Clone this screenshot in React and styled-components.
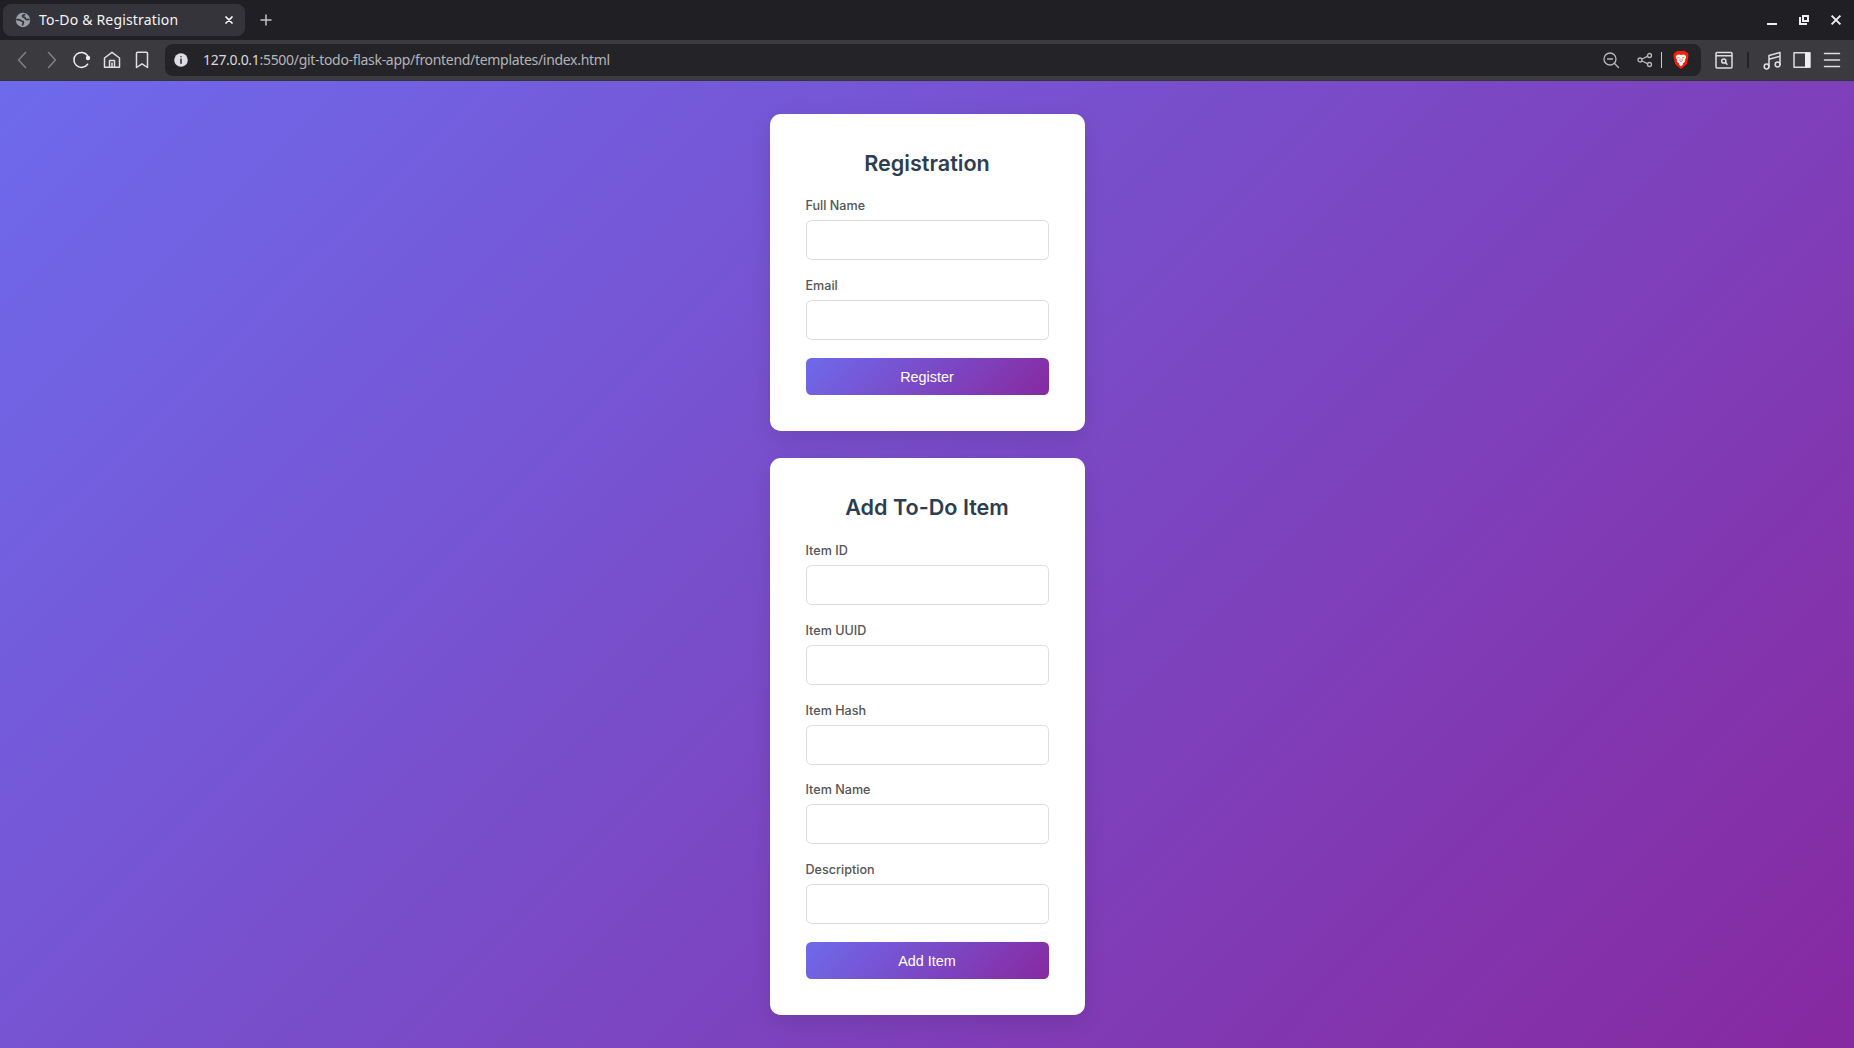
import React from "react";
import styled, { createGlobalStyle } from "styled-components";

const GlobalStyle = createGlobalStyle`
  * { box-sizing: border-box; }
  html, body { margin: 0; padding: 0; }
  body { font-family: Inter, "Liberation Sans", sans-serif; }
`;

const gradient = "linear-gradient(135deg, #6e6aec, #8729a0)";

const Window = styled.div`
  display: flex;
  flex-direction: column;
  width: 100%;
  height: 100vh;
  overflow: hidden;
`;

const Flex = styled.div`
  display: flex;
  align-items: center;
`;

const TabStrip = styled(Flex)`
  height: 40px;
  flex: none;
  padding: 0 9px 0 3px;
  background: #202024;
  color: #fff;
`;

const Tab = styled(Flex)`
  width: 242px;
  height: 32px;
  padding: 0 11px 0 12px;
  border-radius: 8px;
  background: #35343a;
`;

const TabTitle = styled.span`
  flex: 1;
  margin-left: 8px;
  font: 14px/20px "Noto Sans", sans-serif;
  letter-spacing: 0.18px;
  white-space: nowrap;
  color: #f4f4f6;
`;

const NewTab = styled(Flex)`
  margin-left: 15px;
  flex: 1;
`;

const WindowControls = styled(Flex)`
  gap: 14px;
  padding-right: 0.5px;
`;

const Toolbar = styled(Flex)`
  height: 41px;
  flex: none;
  padding: 0 12px;
  background: #3b3a3f;
  border-bottom: 1px solid #36343a;
`;

const NavButtons = styled(Flex)`
  gap: 10px;
  margin-right: 13px;
`;

const AddressBar = styled(Flex)`
  flex: 1;
  height: 32px;
  padding: 0 12px 0 9px;
  border-radius: 8px;
  background: #242428;
`;

const Address = styled.span`
  flex: 1;
  margin-left: 15px;
  font: 14px/20px "Noto Sans", sans-serif;
  letter-spacing: -0.31px;
  white-space: nowrap;
  color: #b4b4b8;
`;

const Host = styled.span`
  color: #d8d8dc;
`;

const Divider = styled.span`
  width: ${(p) => p.$width}px;
  height: 16px;
  margin: ${(p) => p.$margin};
  background: ${(p) => p.$color};
`;

const Actions = styled(Flex)`
  margin-left: 14px;
`;

const Tools = styled(Flex)`
  gap: 10px;
`;

const Icon = styled.svg`
  display: block;
  flex: none;
  width: ${(p) => p.$w || 20}px;
  height: ${(p) => p.$h || p.$w || 20}px;
  margin-left: ${(p) => p.$ml || 0}px;
  fill: none;
  stroke: ${(p) => p.$color || "#dedee2"};
  stroke-width: ${(p) => p.$stroke || 1.5};
  stroke-linecap: round;
  stroke-linejoin: round;
`;

const Page = styled.main`
  flex: 1;
  display: flex;
  flex-direction: column;
  align-items: center;
  gap: 27px;
  padding-top: 33px;
  background: ${gradient};
`;

const Card = styled.form`
  width: 315px;
  height: ${(p) => p.$height}px;
  flex: none;
  padding: 36px;
  border-radius: 10.8px;
  background: #fff;
  box-shadow: 0 7.2px 22.5px rgba(0, 0, 0, 0.1);
`;

const Title = styled.h2`
  margin: 0 0 20.45px;
  font-size: 21.6px;
  line-height: 27px;
  font-weight: 600;
  text-align: center;
  color: #2c3e50;
`;

const Field = styled.div`
  height: 63px;
  margin-bottom: 16.8px;

  &:last-of-type {
    margin-bottom: 18px;
  }
`;

const Label = styled.label`
  display: block;
  height: 23px;
  font-size: 12.6px;
  line-height: 18px;
  font-weight: 500;
  color: #555;
`;

const Input = styled.input`
  display: block;
  width: 100%;
  height: 40px;
  padding: 0 11px;
  border: 1px solid #ddd;
  border-radius: 5.4px;
  background: #fff;
  outline: none;
`;

const Submit = styled.button`
  display: block;
  width: 100%;
  height: 37px;
  padding: 0;
  border: 0;
  border-radius: 5.4px;
  background: ${gradient};
  font: 14.4px "Liberation Sans", Arial, sans-serif;
  color: #fff;
`;

function FormCard({ title, fields, action, height }) {
  return (
    <Card $height={height} onSubmit={(e) => e.preventDefault()}>
      <Title>{title}</Title>
      {fields.map((name) => (
        <Field key={name}>
          <Label htmlFor={name}>{name}</Label>
          <Input id={name} />
        </Field>
      ))}
      <Submit>{action}</Submit>
    </Card>
  );
}

function BrowserTabs() {
  return (
    <TabStrip>
      <Tab>
        <Icon $w={16} viewBox="0 0 16 16" $color="none">
          <circle cx="8" cy="8" r="7.2" fill="#9aa0a6" />
          <path d="M2 7.600c1.500-.2 3 .2 3.800 1 .9.900 2 .4 2.500 1.200.5.900-.5 1.500-.7 3" stroke="#35343a" strokeWidth="1.7" />
          <path d="M9.600 2.600c-1.500.3-2.300 1.100-1.900 1.900.5.900 1.800.5 2.300 1.300.5.900.2 1.500 1.300 1.700 1 .2 1.500-.2 2.500 0" stroke="#35343a" strokeWidth="1.7" />
        </Icon>
        <TabTitle>To-Do &amp; Registration</TabTitle>
        <Icon $w={10} viewBox="0 0 10 10" $color="#fff" $stroke={1.7}>
          <path d="M2 2l6 6M8 2l-6 6" />
        </Icon>
      </Tab>
      <NewTab>
        <Icon $w={12} viewBox="0 0 12 12" $color="#c4c4c8">
          <path d="M6 1v10M1 6h10" />
        </Icon>
      </NewTab>
      <WindowControls>
        <Icon $w={18} viewBox="0 0 18 18" $color="#eeeef2" $stroke={2}>
          <path d="M4 13h10" strokeLinecap="butt" />
        </Icon>
        <Icon $w={18} viewBox="0 0 18 18" $color="#eeeef2" $stroke={2}>
          <path d="M8 5h5v5H8zM5 6v7h7" strokeLinecap="butt" strokeLinejoin="miter" />
        </Icon>
        <Icon $w={18} viewBox="0 0 18 18" $color="#eeeef2" $stroke={2}>
          <path d="M4.600 4.600l8.800 8.800M13.400 4.600l-8.800 8.800" strokeLinecap="butt" />
        </Icon>
      </WindowControls>
    </TabStrip>
  );
}

function BrowserToolbar() {
  return (
    <Toolbar>
      <NavButtons>
        <Icon viewBox="0 0 20 20" $color="#828186">
          <path d="M13.500 2.500L6.500 10l7 7.500" />
        </Icon>
        <Icon viewBox="0 0 20 20" $color="#828186">
          <path d="M6.500 2.500l7 7.500-7 7.500" />
        </Icon>
        <Icon viewBox="0 0 20 20" $color="#f0f0f4">
          <path d="M15.600 14.200A7.500 7.500 0 1 1 15.600 5.600" />
          <circle cx="16" cy="8" r="2.200" fill="#f0f0f4" stroke="none" />
        </Icon>
        <Icon viewBox="0 0 20 20">
          <path d="M2.500 8v9.300h15V8L10 2.300zM7.500 17V10.500h5V17M10 13v4" />
        </Icon>
        <Icon viewBox="0 0 20 20">
          <path d="M4.500 3.300q0-1 1-1h9q1 0 1 1v14.200L10 13.800l-5.500 3.700z" />
        </Icon>
      </NavButtons>
      <AddressBar>
        <Icon $w={14} viewBox="0 0 14 14" $color="none">
          <circle cx="7" cy="7" r="6.800" fill="#dcdce2" />
          <path d="M7 6.300v4M7 3.700v.1" stroke="#303036" strokeWidth="1.600" />
        </Icon>
        <Address><Host>127.0.0.1</Host>:5500/git-todo-flask-app/frontend/templates/index.html</Address>
        <Icon $w={18} viewBox="0 0 18 18" $color="#b8b8bc" $stroke={1.3}>
          <circle cx="8" cy="8" r="6" />
          <path d="M5.500 8h5M12.300 12.300L16.500 16.500" />
        </Icon>
        <Icon $w={16} $ml={17} viewBox="0 0 16 16" $color="#b8b8bc" $stroke={1.3}>
          <circle cx="3" cy="8" r="2" />
          <circle cx="12.500" cy="3.500" r="2" />
          <circle cx="12.500" cy="12.500" r="2" />
          <path d="M5 7l5.500-2.600M5 9l5.500 2.600" />
        </Icon>
        <Divider $width={1} $margin="0 11px 0 8px" $color="#c8c8cc" />
        <Icon $w={16} $h={18} viewBox="0 0 17 18" preserveAspectRatio="none" $color="none">
          <path d="M4.200 0h8.600l1.300 1.500 1.700.2.700 3-1.700 8.200L8.500 18l-6.300-5.100L.5 4.700l.7-3 1.700-.2z" fill="#fb1e05" />
          <path d="M3.800 4.200l2.100-.7 2.600.4 2.600-.4 2.100.7.9 1.800-1.500 3.300.1 1.500-2 1.500-.3 1.500-1.900 1.400-1.900-1.400-.3-1.500-2-1.500.1-1.500-1.500-3.300z" fill="#fff" />
          <path d="M5 6.200l1.800.5M12 6.200l-1.800.5M7.500 8l-.4 1.900 1.400.7 1.400-.7-.4-1.900" stroke="#fb1e05" strokeWidth=".6" />
        </Icon>
      </AddressBar>
      <Actions>
        <Icon $w={18} viewBox="0 0 18 18">
          <path d="M2 1.500h14q1 0 1 1V16q0 1-1 1H2q-1 0-1-1V2.500q0-1 1-1zM1 4.700h16" />
          <circle cx="8.800" cy="10" r="2.100" />
          <path d="M10.500 11.500l1.500 1.700" />
        </Icon>
        <Divider $width={2} $margin="0 13px 0 14px" $color="#242428" />
        <Tools>
          <Icon viewBox="0 0 20 20">
            <path d="M7 16.500V5.500L18 2.500v12M7 9.200l11-3" />
            <circle cx="4.600" cy="16.500" r="2.400" />
            <circle cx="15.600" cy="14.500" r="2.400" />
          </Icon>
          <Icon viewBox="0 0 20 20">
            <path d="M2 2.800h16v14.500H2z" />
            <path d="M13 2.800h5v14.500h-5z" fill="#eeeef2" stroke="none" />
          </Icon>
          <Icon viewBox="0 0 20 20">
            <path d="M2.500 3.500h15M2.500 10h15M2.500 16.500h15" />
          </Icon>
        </Tools>
      </Actions>
    </Toolbar>
  );
}

export default function App() {
  return (
    <Window>
      <GlobalStyle />
      <BrowserTabs />
      <BrowserToolbar />
      <Page>
        <FormCard title="Registration" fields={["Full Name", "Email"]} action="Register" height={317.47} />
        <FormCard
          title="Add To-Do Item"
          fields={["Item ID", "Item UUID", "Item Hash", "Item Name", "Description"]}
          action="Add Item"
          height={557}
        />
      </Page>
    </Window>
  );
}
